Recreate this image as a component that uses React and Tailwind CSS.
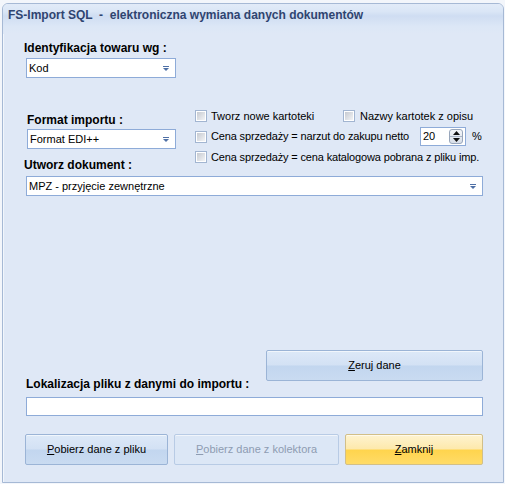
import React from 'react';

const Arrow = () => (
  <svg width="6" height="5" viewBox="0 0 6 5" className="shrink-0">
    <rect x="0" y="0" width="6" height="1" fill="#4f70a6" />
    <polygon points="0,2 6,2 3,5" fill="#4f70a6" />
  </svg>
);

function Select({ value, className = '' }) {
  return (
    <div className={`flex items-center justify-between bg-white border border-[#8eabd8] pl-[2px] pr-[6px] ${className}`}>
      <span className="text-[11px] text-black leading-none">{value}</span>
      <Arrow />
    </div>
  );
}

function Check({ label, className = '', tight = false }) {
  return (
    <label className={`flex items-center gap-[4px] ${className}`}>
      <span className="w-[12px] h-[12px] border border-[#a2b5d1] bg-white p-[1px] shrink-0">
        <span className="block w-full h-full bg-gradient-to-br from-[#c6cad1] to-[#f3f4f6]" />
      </span>
      <span className={`text-[11px] text-black whitespace-nowrap ${tight ? 'tracking-[-0.15px]' : ''}`}>{label}</span>
    </label>
  );
}

function Button({ children, variant = 'blue', className = '' }) {
  const styles = {
    blue: 'border-[#9bb4d6] bg-[linear-gradient(to_bottom,#dde9f8_0%,#d3e1f4_48%,#c2d6ef_52%,#c9dbf1_100%)] text-black',
    disabled: 'border-[#b8cbe5] bg-[#dce7f6] text-[#8e9cb2]',
    yellow: 'border-[#d2bf88] bg-[linear-gradient(to_bottom,#fef3cf_0%,#fde9ac_48%,#ffd44d_52%,#ffdb68_100%)] text-black',
  };
  return (
    <button className={`h-[31px] rounded-[2px] border text-[11px] shadow-[inset_0_1px_0_rgba(255,255,255,0.6)] ${styles[variant]} ${className}`}>
      {children}
    </button>
  );
}

function Spinner() {
  return (
    <div className="flex items-center justify-between w-[46px] h-[19px] bg-white border border-[#8eabd8] pl-[2px] pr-[2px]">
      <span className="text-[11px] text-black leading-none">20</span>
      <div className="flex flex-col w-[14px] h-[15px] rounded-[3px] border border-[#98a6bb] bg-gradient-to-b from-[#f4f6f9] to-[#d7dee8]">
        <div className="flex-1 flex items-center justify-center border-b border-[#aab5c6]">
          <svg width="7" height="4" viewBox="0 0 7 4"><polygon points="0,4 7,4 3.5,0" fill="#111" /></svg>
        </div>
        <div className="flex-1 flex items-center justify-center">
          <svg width="7" height="4" viewBox="0 0 7 4"><polygon points="0,0 7,0 3.5,4" fill="#111" /></svg>
        </div>
      </div>
    </div>
  );
}

export default function App() {
  return (
    <div className="w-[505px] h-[484px] bg-[#f3f6fb] pt-[3px] pl-[2px] pr-[1px] pb-[1px] flex font-['Liberation_Sans',Arial,sans-serif]">
      <div className="flex-1 flex flex-col border border-[#a6b9d5] rounded-t-[6px] bg-[#dfe8f6] shadow-[inset_1px_1px_0_#f1f6fc] overflow-hidden">
        {/* Title */}
        <div className="h-[30px] shrink-0 pl-[5px] pt-[4px] bg-[linear-gradient(to_bottom,#e2ebf8_0%,#dae6f6_25%,#cfddf2_40%,#dce7f6_75%,#dfe8f6_100%)]">
          <div className="text-[12px] font-bold leading-[14px] text-[#2f4470] whitespace-pre">FS-Import SQL  -  elektroniczna wymiana danych dokumentów</div>
        </div>

        <div className="pl-[21px] flex flex-col">
          <div className="mt-[7px] text-[12px] font-bold leading-[14px] text-black">Identyfikacja towaru wg :</div>
          <Select value="Kod" className="mt-[3px] ml-[2px] w-[150px] h-[20px]" />

          {/* Import format + options */}
          <div className="mt-[28px] flex">
            <div className="w-[171px] pt-[7px] flex flex-col">
              <div className="text-[12px] font-bold leading-[14px] text-black ml-[3px]">Format importu :</div>
              <Select value="Format EDI++" className="mt-[2px] ml-[3px] w-[149px] h-[20px]" />
              <div className="mt-[9px] text-[12px] font-bold leading-[14px] text-black">Utworz dokument :</div>
            </div>
            <div className="flex flex-col">
              <div className="h-[20px] flex items-center">
                <Check label="Tworz nowe kartoteki" className="w-[148px]" />
                <Check label="Nazwy kartotek z opisu" className="gap-[5px]" />
              </div>
              <div className="h-[21px] flex items-center">
                <Check label="Cena sprzedaży = narzut do zakupu netto" className="w-[225px]" tight />
                <Spinner />
                <span className="ml-[6px] text-[11px] text-black">%</span>
              </div>
              <div className="h-[20px] flex items-center">
                <Check label="Cena sprzedaży = cena katalogowa pobrana z pliku imp." tight />
              </div>
            </div>
          </div>
          <Select value="MPZ - przyjęcie zewnętrzne" className="mt-[4px] ml-[2px] w-[457px] h-[20px]" />

          <Button className="mt-[154px] ml-[242px] w-[217px]"><u>Z</u>eruj dane</Button>
          <div className="-mt-[4px] ml-[2px] text-[12px] font-bold leading-[14px] text-black">Lokalizacja pliku z danymi do importu :</div>
          <div className="mt-[6px] ml-[2px] w-[457px] h-[19px] bg-white border border-[#8eabd8]" />

          <div className="mt-[18px] ml-[1px] flex">
            <Button className="w-[143px]"><u>P</u>obierz dane z pliku</Button>
            <Button variant="disabled" className="ml-[6px] w-[165px]"><u>P</u>obierz dane z kolektora</Button>
            <Button variant="yellow" className="ml-[6px] w-[138px]"><u>Z</u>amknij</Button>
          </div>
        </div>
      </div>
    </div>
  );
}
